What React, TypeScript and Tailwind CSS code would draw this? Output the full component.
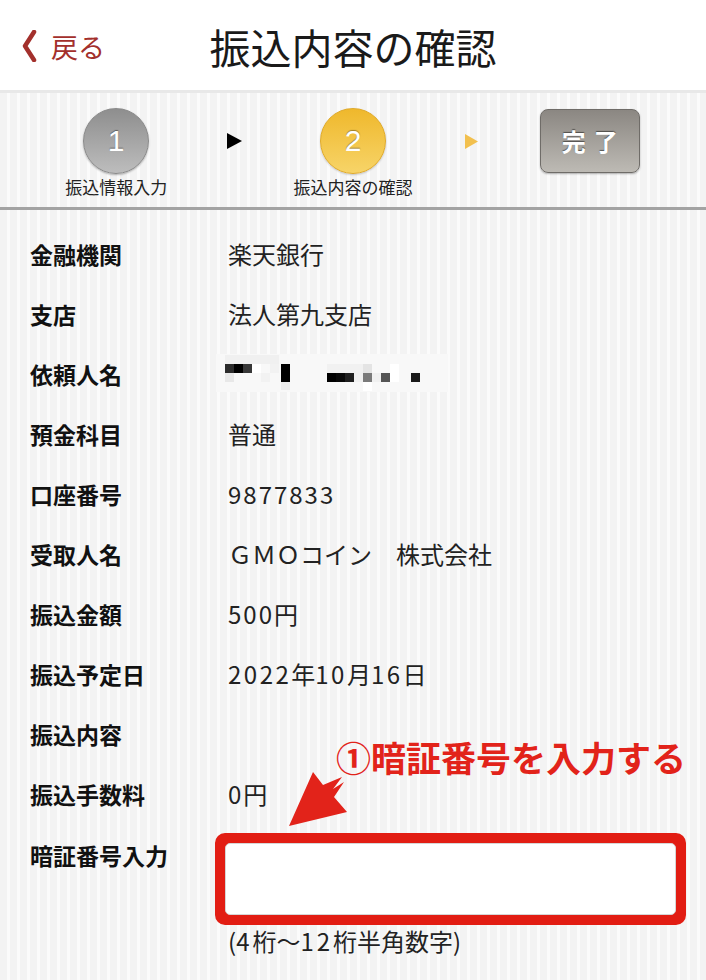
import React from "react";

const FONT = { fontFamily: '"Noto Sans CJK JP", "Noto Sans", sans-serif' };

function MaskedName() {
  return (
    <svg width="232" height="40" viewBox="0 0 232 40" className="-ml-[12px] block">
      <rect x="0" y="0" width="232" height="38" fill="#f8f8f8" />
      <rect x="9" y="1" width="54" height="9" fill="#f0f0f0" />
      <rect x="9" y="10" width="9" height="9" fill="#2b2b2b" />
      <rect x="18" y="10" width="9" height="9" fill="#000" />
      <rect x="27" y="10" width="9" height="9" fill="#383838" />
      <rect x="36" y="10" width="9" height="9" fill="#fff" />
      <rect x="54" y="10" width="9" height="9" fill="#f2f2f2" />
      <rect x="65" y="10" width="9" height="18" fill="#000" />
      <rect x="9" y="19" width="9" height="9" fill="#e8e8e8" />
      <rect x="45" y="19" width="9" height="9" fill="#f2f2f2" />
      <rect x="65" y="28" width="9" height="8" fill="#ececec" />
      <rect x="111" y="19" width="9" height="9" fill="#000" />
      <rect x="120" y="19" width="9" height="9" fill="#080808" />
      <rect x="129" y="19" width="9" height="9" fill="#1f1f1f" />
      <rect x="138" y="19" width="9" height="9" fill="#f0f0f0" />
      <rect x="147" y="19" width="9" height="9" fill="#7a7a7a" />
      <rect x="147" y="10" width="9" height="9" fill="#e4e4e4" />
      <rect x="156" y="19" width="9" height="9" fill="#f0f0f0" />
      <rect x="165" y="19" width="9" height="9" fill="#555" />
      <rect x="174" y="19" width="9" height="9" fill="#fff" />
      <rect x="174" y="10" width="9" height="9" fill="#fff" />
      <rect x="195" y="19" width="9" height="9" fill="#1a1a1a" />
      <rect x="111" y="10" width="36" height="9" fill="#f1f1f1" />
      <rect x="147" y="28" width="9" height="9" fill="#fff" />
    </svg>
  );
}

export default function App() {
  const rows: [string, React.ReactNode][] = [
    ["金融機関", "楽天銀行"],
    ["支店", "法人第九支店"],
    ["依頼人名", <MaskedName />],
    ["預金科目", "普通"],
    ["口座番号", <span className="tracking-[2px]">9877833</span>],
    ["受取人名", "ＧＭＯコイン　株式会社"],
    ["振込金額", <span><span className="tracking-[2px]">500</span>円</span>],
    [
      "振込予定日",
      <span>
        <span className="tracking-[2.5px]">2022</span>年<span className="tracking-[2.5px]">10</span>月<span className="tracking-[2.5px]">16</span>日
      </span>,
    ],
    ["振込内容", ""],
    ["振込手数料", <span><span className="tracking-[2px]">0</span>円</span>],
  ];

  const stripes =
    "bg-[repeating-linear-gradient(90deg,#f3f3f3_0px,#f3f3f3_7px,#fbfbfb_7px,#fbfbfb_10px)]";

  return (
    <div className="w-[706px] h-[980px] overflow-hidden bg-[#f4f4f4]" style={FONT}>
      {/* Header */}
      <div className="h-[93px] bg-white border-b-[3px] border-[#e8e8e8] grid grid-cols-[1fr_auto_1fr] items-center">
        <div className="flex items-center pl-[22px] pt-[2px]">
          <svg width="15" height="32" viewBox="0 0 15 32">
            <path d="M12 2 L3 16 L12 30" fill="none" stroke="#a3302c" strokeWidth="4.5" strokeLinecap="round" strokeLinejoin="round" />
          </svg>
          <span className="ml-[14px] text-[27px] leading-none text-[#a3302c]">戻る</span>
        </div>
        <div className="text-[41px] leading-none text-[#1a1a1a] pt-[2px]">振込内容の確認</div>
        <div />
      </div>

      {/* Stepper */}
      <div className={`h-[117px] border-b-[3px] border-[#a3a3a3] ${stripes} grid grid-cols-5 px-[57px] pt-[15px]`}>
        <div className="flex flex-col items-center">
          <div className="w-[66px] h-[66px] rounded-full border border-[#8a8a8a] bg-[linear-gradient(180deg,#8e8e8e,#bdbdbd)] flex items-center justify-center shadow-[0_1px_2px_rgba(0,0,0,0.3)]">
            <span className="text-white text-[30px] leading-none [text-shadow:0_-1px_1px_rgba(0,0,0,0.4)]" style={{ fontFamily: '"Liberation Sans", sans-serif' }}>1</span>
          </div>
          <div className="mt-[4px] text-[17px] leading-none text-[#222] whitespace-nowrap">振込情報入力</div>
        </div>
        <div className="h-[66px] flex items-center justify-center">
          <svg width="15" height="16" viewBox="0 0 15 16"><path d="M0 0 L15 8 L0 16 Z" fill="#000" /></svg>
        </div>
        <div className="flex flex-col items-center">
          <div className="w-[66px] h-[66px] rounded-full border border-[#e0aa2a] bg-[linear-gradient(180deg,#efb82c,#f7d468)] flex items-center justify-center shadow-[0_1px_2px_rgba(0,0,0,0.2)]">
            <span className="text-white text-[30px] leading-none [text-shadow:0_-1px_1px_rgba(0,0,0,0.35)]" style={{ fontFamily: '"Liberation Sans", sans-serif' }}>2</span>
          </div>
          <div className="mt-[4px] text-[17px] leading-none text-[#222] whitespace-nowrap">振込内容の確認</div>
        </div>
        <div className="h-[66px] flex items-center justify-center">
          <svg width="13" height="15" viewBox="0 0 13 15"><path d="M0 0 L13 7.5 L0 15 Z" fill="#f2c04e" /></svg>
        </div>
        <div className="flex flex-col items-center">
          <div className="mt-[1px] w-[100px] h-[64px] rounded-[8px] border border-[#6f6c68] bg-[linear-gradient(180deg,#8b8782,#bdbab4)] flex items-center justify-center shadow-[0_1px_2px_rgba(0,0,0,0.3)]">
            <span className="text-white text-[24px] font-bold leading-none tracking-[8px] pl-[8px] [text-shadow:0_-1px_1px_rgba(0,0,0,0.5)]">完了</span>
          </div>
        </div>
      </div>

      {/* Body */}
      <div className={`relative h-[770px] ${stripes} pt-[14px]`}>
        {rows.map(([label, value], i) => (
          <div key={i} className="h-[60px] flex items-center">
            <div className="w-[228px] pl-[30px] text-[23px] font-bold text-[#111] leading-none">{label}</div>
            <div className="text-[24px] text-[#222] leading-none">{value}</div>
          </div>
        ))}
        <div className="flex items-start">
          <div className="w-[215px] pl-[30px] pt-[14px] text-[23px] font-bold text-[#111] leading-[34px]">暗証番号入力</div>
          <div className="flex flex-col">
            <div className="mt-[9px] w-[471px] h-[92px] border-[8px] border-[#e21d13] rounded-[10px] p-[2px] bg-[#e21d13]">
              <div className="w-full h-full bg-white rounded-[5px] border border-[#d6d6d6]" />
            </div>
            <div className="ml-[13px] mt-[1px] text-[24px] leading-[30px] text-[#222]">
              (<span className="tracking-[3px]">4</span>桁〜<span className="tracking-[3px]">12</span>桁半角数字)
            </div>
          </div>
        </div>

        {/* Annotation */}
        <div className="absolute left-[336px] top-[529px] text-[35px] leading-none font-bold text-[#e2231a] whitespace-nowrap">
          ①暗証番号を入力する
        </div>
        <svg className="absolute left-[285px] top-[555px]" width="70" height="70" viewBox="0 0 70 70">
          <polygon points="4,61 28,7 38,20 57,12 48,24 59,17 49,32 62,47" fill="#e2231a" />
        </svg>
      </div>
    </div>
  );
}
